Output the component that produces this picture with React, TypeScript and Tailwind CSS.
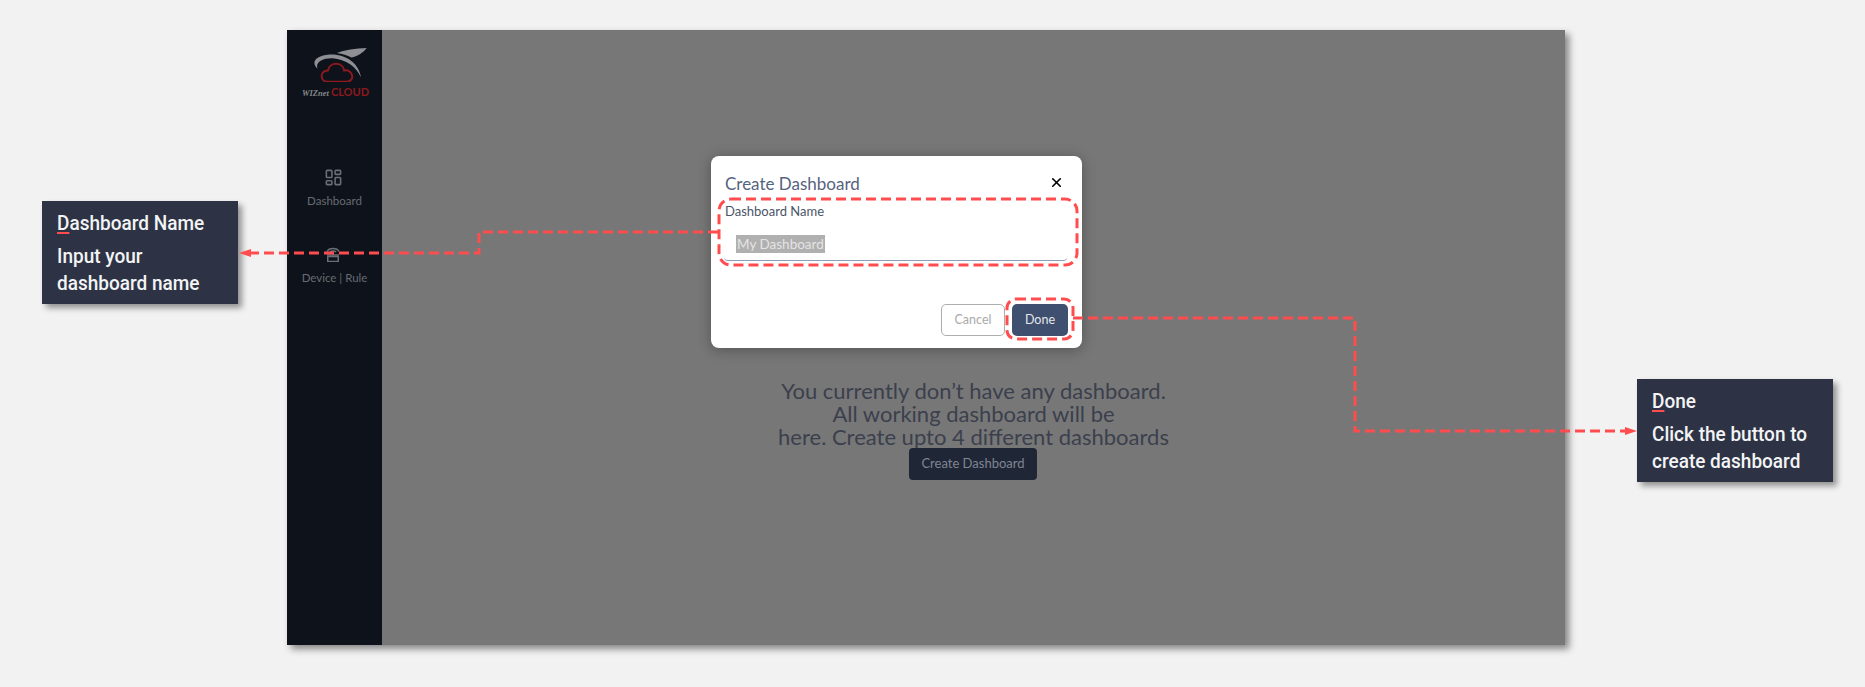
import { LayoutDashboard, X } from 'lucide-react';

function Logo() {
  return (
    <div className="flex flex-col items-center">
      <svg width="58" height="37" viewBox="90 75 175 110" fill="none" className="ml-[10px]">
        <path
          d="M110 146 C88 125 105 107 145 103 C195 100 235 130 241 172 C228 140 195 117 155 114 C125 113 102 126 110 146 Z"
          fill="#8d8f94"
        />
        <path d="M258 83 C225 84 190 90 168 98 C185 100 200 105 212 112 C230 108 247 98 258 83 Z" fill="#8d8f94" />
        <path
          d="M140 185 C118 185 114 152 141 151 C146 124 186 124 190 151 C216 146 226 185 196 185 Z"
          stroke="#8c191d"
          strokeWidth="6"
        />
      </svg>
      <div className="flex items-baseline gap-[2px] whitespace-nowrap mt-[2px] ml-[2px] h-[14px]">
        <span className="font-['Liberation_Serif',serif] italic font-bold text-[8.5px] text-[#85878c]">WIZnet</span>
        <span className="text-[11px] font-bold text-[#8c191d]">CLOUD</span>
      </div>
    </div>
  );
}

function DeviceIcon() {
  return (
    <svg width="14" height="15" viewBox="0 0 14 15" fill="none" stroke="#6b6e74" strokeWidth="1.5" className="-ml-[2px]">
      <path d="M1 4.5 C3 0.5 11 0.5 13 4.5" />
      <path d="M4 5 C5 3.5 9 3.5 10 5" />
      <path d="M7 5 V8" />
      <path d="M1 8 H13" />
      <rect x="1.75" y="9.5" width="10.5" height="5" />
    </svg>
  );
}

function Callout({ title, firstLetter, lines }: { title: string; firstLetter: string; lines: string[] }) {
  return (
    <div className="w-[196px] h-[103px] shrink-0 bg-[#2d3344] pl-[15px] pt-[9px] text-[#f3f4f6] font-['Roboto',sans-serif] font-medium text-[20px] leading-[27px] shadow-[4px_4px_6px_rgba(0,0,0,0.4)]">
      <div className="mb-[6px] whitespace-nowrap origin-left scale-x-[0.95]">
        <span className="underline decoration-[#ff4d4f] decoration-2 underline-offset-[2px]">{firstLetter}</span>
        {title}
      </div>
      {lines.map((line) => (
        <div key={line} className="whitespace-nowrap origin-left scale-x-[0.95]">{line}</div>
      ))}
    </div>
  );
}

function Annotations() {
  const dash = { stroke: '#ff4d4f', strokeWidth: 3, strokeDasharray: '10 5', fill: 'none' };
  return (
    <svg className="absolute inset-0 pointer-events-none" width="1865" height="687">
      <rect x="719" y="199" width="358" height="66" rx="12" {...dash} />
      <rect x="1007" y="299" width="66" height="40" rx="9" {...dash} />
      <path d="M718 232 H479 V253 H248" {...dash} />
      <path d="M1073 318 H1355 V431 H1626" {...dash} />
      <path d="M239 253 L251 249 V257 Z" fill="#ff4d4f" />
      <path d="M1637 431 L1625 427 V435 Z" fill="#ff4d4f" />
    </svg>
  );
}

function Modal() {
  return (
    <div className="absolute left-[424px] top-[126px] w-[371px] h-[192px] bg-white rounded-[8px] shadow-[0_2px_14px_rgba(0,0,0,0.3)] px-[14px] font-['Lato',sans-serif]">
      <div className="flex items-center justify-between h-[54px] pr-[1px]">
        <h2 className="text-[17px] text-[#56637f] mt-[1px]">Create Dashboard</h2>
        <X size={15} strokeWidth={2.5} className="text-black mr-[3px] -mt-[2px]" />
      </div>
      <div className="text-[13px] leading-[16px] text-[#4a5568] -mt-[7px]">Dashboard Name</div>
      <div className="ml-[-1px] mt-[8px] h-[34px] pl-[12px] border-b border-[#8f9cbc] rounded-b-[4px] w-[343px]">
        <span className="inline-block bg-[#b0b0b0] text-[#e4e4e4] text-[13.5px] leading-[18px] px-[1px] mt-[8px]">My Dashboard</span>
      </div>
      <div className="flex justify-end gap-[7px] mt-[43px]">
        <button className="w-[64px] h-[32px] border border-[#aeaeae] rounded-[5px] text-[12.5px] text-[#a9a9a9]">Cancel</button>
        <button className="w-[56px] h-[32px] bg-[#3f4f6f] rounded-[5px] text-[12.5px] text-[#e5e7eb]">Done</button>
      </div>
    </div>
  );
}

export default function App() {
  const message = [
    'You currently don’t have any dashboard.',
    'All working dashboard will be',
    'here. Create upto 4 different dashboards',
  ];

  return (
    <div className="relative w-[1865px] h-[687px] overflow-hidden bg-[#f2f2f2] flex items-start pl-[42px]">
      <div className="mt-[201px]">
        <Callout firstLetter="D" title="ashboard Name" lines={['Input your', 'dashboard name']} />
      </div>

      <div className="relative ml-[49px] mt-[30px] w-[1278px] h-[615px] flex bg-[#777777] shadow-[4px_4px_7px_rgba(0,0,0,0.45)] font-['Lato',sans-serif]">
        <aside className="w-[95px] bg-[#0e131b] flex flex-col items-center pt-[15px] text-[#676b72] text-[11.5px]">
          <Logo />
          <div className="flex flex-col items-center mt-[70px]">
            <LayoutDashboard size={19} strokeWidth={2} color="#6b6e74" className="-ml-[2px]" />
            <span className="mt-[6px] leading-[16px]">Dashboard</span>
          </div>
          <div className="flex flex-col items-center mt-[38px]">
            <DeviceIcon />
            <span className="mt-[8px] leading-[16px]">Device | Rule</span>
          </div>
        </aside>

        <main className="flex-1 flex flex-col items-center pt-[349px]">
          <div className="text-[22px] leading-[23px] text-[#3b404d] text-center whitespace-nowrap">
            {message.map((line) => (
              <div key={line}>{line}</div>
            ))}
          </div>
          <button className="w-[128px] h-[32px] -ml-[1px] bg-[#1f2736] rounded-[4px] text-[13px] text-[#7f8593]">Create Dashboard</button>
        </main>

        <Modal />
      </div>

      <div className="ml-[72px] mt-[379px]">
        <Callout firstLetter="D" title="one" lines={['Click the button to', 'create dashboard']} />
      </div>

      <Annotations />
    </div>
  );
}
